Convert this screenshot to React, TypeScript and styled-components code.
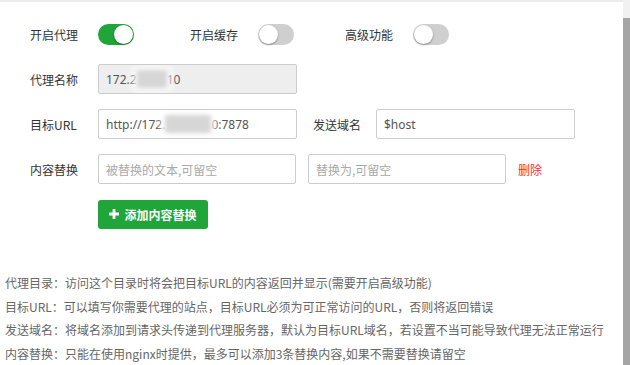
import styled, { createGlobalStyle } from 'styled-components'

const GlobalStyle = createGlobalStyle`
  html, body {
    margin: 0;
    padding: 0;
    background: #fff;
  }
  body {
    font-family: "Noto Sans CJK SC", "Noto Sans", sans-serif;
    font-size: 12px;
    color: #333;
  }
  * { box-sizing: border-box; }
`

const Frame = styled.div`
  width: 630px;
  height: 365px;
  display: flex;
  overflow: hidden;
`

const Content = styled.div`
  flex: 1;
  border-top: 2px solid #ececec;
  display: flex;
  flex-direction: column;
`

const Scrollbar = styled.div`
  width: 7px;
  display: flex;
  flex-direction: column;
  background: #f1f1f1;
`

const Thumb = styled.div`
  margin-top: 18px;
  flex: 1;
  background: #a5a5a5;
`

const Form = styled.div`
  padding: 17px 0 0 30px;
  display: flex;
  flex-direction: column;
  gap: 15px;
`

const Row = styled.div`
  display: flex;
  align-items: center;
  height: 30px;
`

const Label = styled.span<{ $w?: number }>`
  width: ${p => p.$w ?? 68}px;
  flex: none;
  color: #333;
  font-size: 12px;
`

const SwitchGroup = styled.div<{ $w: number }>`
  width: ${p => p.$w}px;
  display: flex;
  align-items: center;
`

const Switch = styled.div<{ $on?: boolean }>`
  width: 36px;
  height: 21px;
  border-radius: 11px;
  background: ${p => (p.$on ? '#20a53a' : '#cfcfcf')};
  display: flex;
  align-items: center;
  justify-content: ${p => (p.$on ? 'flex-end' : 'flex-start')};
  padding: 0 1px;
`

const Knob = styled.div`
  width: 19px;
  height: 19px;
  border-radius: 50%;
  background: #fff;
  box-shadow: 0 1px 2px rgba(0, 0, 0, 0.35);
`

const Field = styled.div<{ $w?: number; $disabled?: boolean }>`
  width: ${p => p.$w ?? 199}px;
  height: 30px;
  border: 1px solid #ccc;
  border-radius: 2px;
  background: ${p => (p.$disabled ? '#eeeeee' : '#fff')};
  padding-left: 7px;
  display: flex;
  align-items: center;
  color: #555;
  font-family: "Noto Sans", "Noto Sans CJK SC", sans-serif;
  font-size: 12px;
  white-space: nowrap;
  overflow: hidden;
`

const Placeholder = styled.span`
  color: #a9a9a9;
  font-family: "Noto Sans CJK SC", sans-serif;
`

const Blur = styled.span<{ $w: number }>`
  display: inline-block;
  width: ${p => p.$w}px;
  height: 18px;
  background: #d6d6d6;
  filter: blur(2px);
  box-shadow: 0 0 6px 4px rgba(255, 255, 255, 0.9);
`

const Gap = styled.div<{ $w: number }>`
  width: ${p => p.$w}px;
  flex: none;
`

const DeleteLink = styled.span`
  color: #ff2a2a;
  font-size: 12px;
`

const AddButton = styled.button`
  width: 110px;
  height: 29px;
  margin-left: 68px;
  border: none;
  border-radius: 3px;
  background: #20a53a;
  color: #fff;
  font-family: "Noto Sans CJK SC", sans-serif;
  font-size: 12px;
  font-weight: 600;
  display: flex;
  align-items: center;
  justify-content: center;
  gap: 5px;
  padding: 0;
`

const Help = styled.ul`
  list-style: none;
  margin: 42px 0 0;
  padding: 0 0 0 5px;
  color: #666;
  font-size: 12px;
  line-height: 23.5px;
`

const Plus = () => (
  <svg width="10" height="10" viewBox="0 0 10 10">
    <path d="M3.6 0h2.8v3.6H10v2.8H6.4V10H3.6V6.4H0V3.6h3.6z" fill="#fff" />
  </svg>
)

const toggles = [
  { label: '开启代理', on: true, w: 160 },
  { label: '开启缓存', on: false, w: 155 },
  { label: '高级功能', on: false, w: 120 },
]

const helps = [
  '代理目录：访问这个目录时将会把目标URL的内容返回并显示(需要开启高级功能)',
  '目标URL：可以填写你需要代理的站点，目标URL必须为可正常访问的URL，否则将返回错误',
  '发送域名：将域名添加到请求头传递到代理服务器，默认为目标URL域名，若设置不当可能导致代理无法正常运行',
  '内容替换：只能在使用nginx时提供，最多可以添加3条替换内容,如果不需要替换请留空',
]

export default function App() {
  return (
    <Frame>
      <GlobalStyle />
      <Content>
        <Form>
          <Row>
            {toggles.map(t => (
              <SwitchGroup key={t.label} $w={t.w}>
                <Label>{t.label}</Label>
                <Switch $on={t.on}>
                  <Knob />
                </Switch>
              </SwitchGroup>
            ))}
          </Row>
          <Row>
            <Label>代理名称</Label>
            <Field $disabled>
              172.2<Blur $w={30} />10
            </Field>
          </Row>
          <Row>
            <Label>目标URL</Label>
            <Field>
              http://172.<Blur $w={46} />0:7878
            </Field>
            <Gap $w={16} />
            <Label $w={63}>发送域名</Label>
            <Field>$host</Field>
          </Row>
          <Row>
            <Label>内容替换</Label>
            <Field $w={198}>
              <Placeholder>被替换的文本,可留空</Placeholder>
            </Field>
            <Gap $w={12} />
            <Field $w={198}>
              <Placeholder>替换为,可留空</Placeholder>
            </Field>
            <Gap $w={12} />
            <DeleteLink>删除</DeleteLink>
          </Row>
          <Row>
            <AddButton>
              <Plus />
              添加内容替换
            </AddButton>
          </Row>
        </Form>
        <Help>
          {helps.map(h => (
            <li key={h}>{h}</li>
          ))}
        </Help>
      </Content>
      <Scrollbar>
        <Thumb />
      </Scrollbar>
    </Frame>
  )
}
